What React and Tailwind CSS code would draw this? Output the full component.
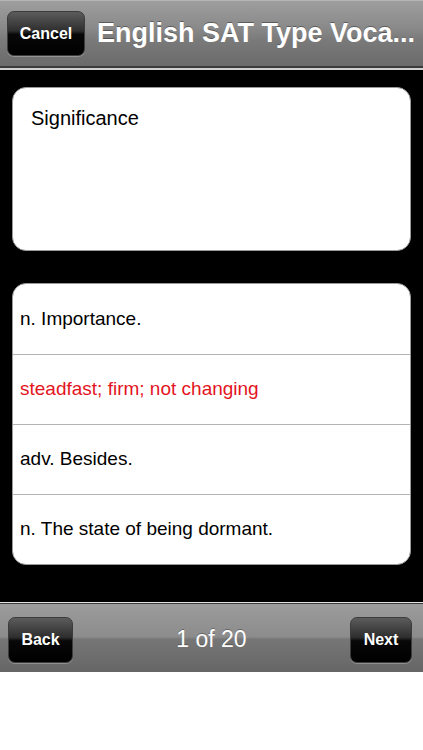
import React from 'react';

const choices = [
  { text: 'n. Importance.', wrong: false },
  { text: 'steadfast; firm; not changing', wrong: true },
  { text: 'adv. Besides.', wrong: false },
  { text: 'n. The state of being dormant.', wrong: false },
];

function BarButton({ label, className = '' }) {
  return (
    <button
      className={`flex items-center justify-center rounded-[7px] border border-[#3c3c3c] bg-[linear-gradient(to_bottom,#5c5c5c_0%,#2e2e2e_44%,#080808_52%,#000_100%)] text-[16px] font-bold text-white shadow-[0_1px_0_rgba(255,255,255,0.25)] ${className}`}
    >
      {label}
    </button>
  );
}

export default function App() {
  return (
    <div className="w-[423px] h-[750px] bg-white font-['Liberation_Sans',Arial,sans-serif]">
      {/* Navigation bar */}
      <div className="flex h-[66px] items-center border-t border-[#b4b4b4] bg-[linear-gradient(to_bottom,#9e9e9e_0%,#8a8a8a_40%,#7a7a7a_60%,#6a6a6a_100%)] pl-[7px]">
        <BarButton label="Cancel" className="h-[45px] w-[78px] shrink-0" />
        <div className="ml-[12px] whitespace-nowrap text-[27px] font-bold text-white [text-shadow:0_-1px_0_rgba(0,0,0,0.35)]">
          English SAT Type Voca...
        </div>
      </div>
      <div className="h-[2px] bg-[#3a3a3a]" />
      <div className="h-[2px] bg-[#cfcfcf]" />

      {/* Question area */}
      <div className="bg-black px-3 pt-[17px] pb-[37px]">
        <div className="h-[164px] rounded-[14px] border border-[#9a9a9a] bg-white px-[18px] pt-[18px]">
          <div className="text-[20px] leading-[24px] text-black">Significance</div>
        </div>

        <div className="mt-[32px] overflow-hidden rounded-[14px] border border-[#9a9a9a] bg-white">
          {choices.map((c, i) => (
            <div
              key={c.text}
              className={`flex h-[70px] items-center px-[7px] ${i > 0 ? 'border-t border-[#b4b4b4]' : ''}`}
            >
              <span className={`text-[19px] ${c.wrong ? 'text-[#e3141e]' : 'text-black'}`}>{c.text}</span>
            </div>
          ))}
        </div>
      </div>

      {/* Toolbar */}
      <div className="h-px bg-[#e2e2e2]" />
      <div className="h-px bg-[#3a3a3a]" />
      <div className="flex h-[68px] items-center justify-between bg-[linear-gradient(to_bottom,#9c9c9c_0%,#8c8c8c_48%,#767676_52%,#666666_100%)] px-[8px] pt-[3px]">
        <BarButton label="Back" className="h-[46px] w-[65px]" />
        <div className="text-[23px] text-white [text-shadow:0_-1px_0_rgba(0,0,0,0.3)]">1 of 20</div>
        <BarButton label="Next" className="mr-[3px] h-[46px] w-[62px]" />
      </div>
    </div>
  );
}
